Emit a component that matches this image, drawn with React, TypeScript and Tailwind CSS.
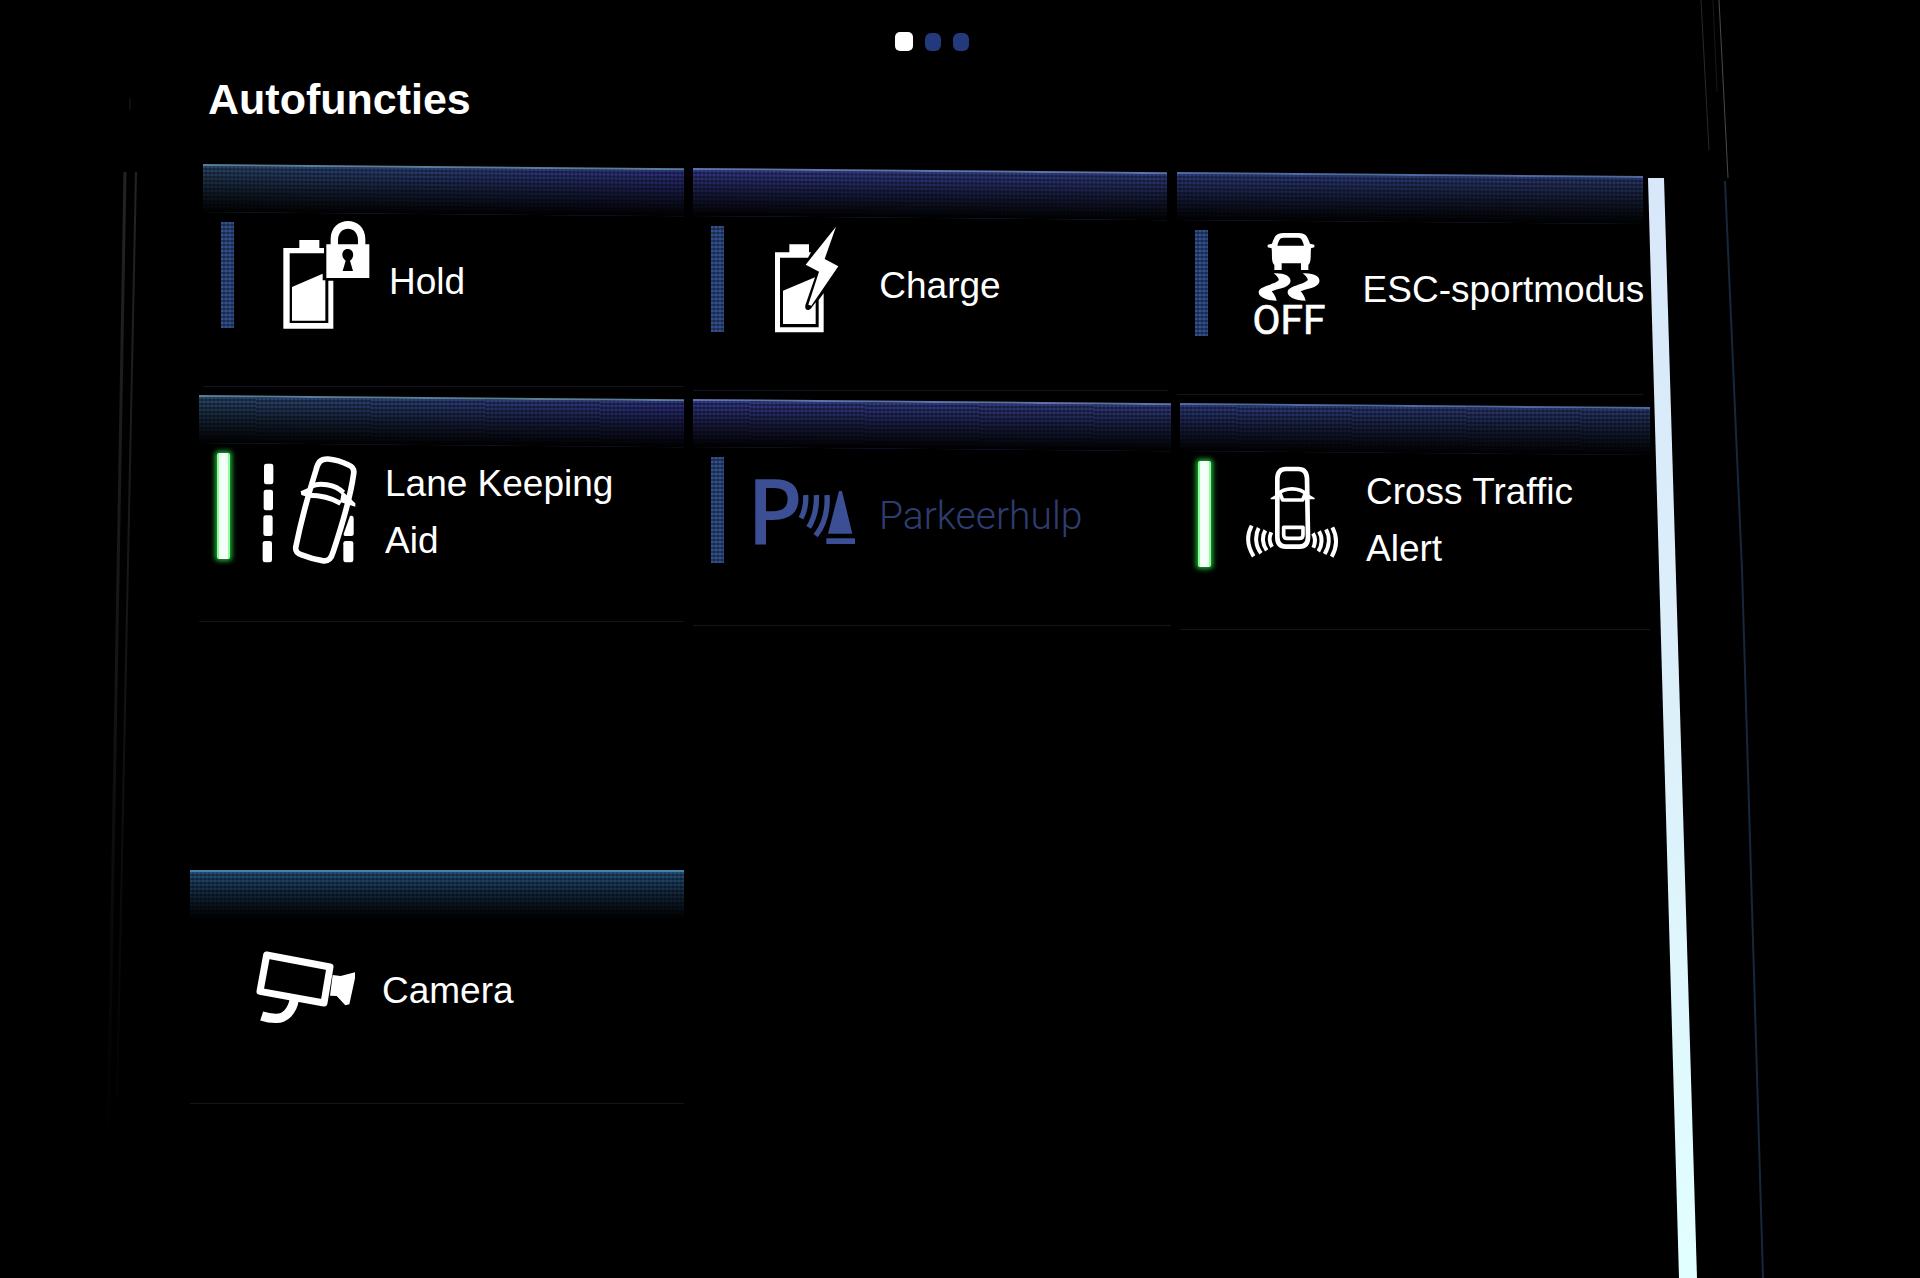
import { type ReactNode } from 'react';
import clsx from 'clsx';

type Tone = 'teal' | 'indigo' | 'navy' | 'steel';

type Tile = {
  label: string;
  icon: ReactNode;
  tone: Tone;
  state?: 'on' | 'off';
  disabled?: boolean;
};

function Icon({ viewBox, children }: { viewBox: string; children: ReactNode }) {
  return (
    <svg viewBox={viewBox} aria-hidden="true" className="h-28 w-[110px] shrink-0 overflow-visible">
      {children}
    </svg>
  );
}

function HoldIcon() {
  return (
    <Icon viewBox="225 216 330 336">
      <path fill="currentColor" d="M328 270h60v24h14v16H299v209h116V392h15v144H280V294h48z" />
      <path fill="currentColor" d="M306 411l92-40v20h8v121H306z" />
      <path
        fill="currentColor"
        fillRule="evenodd"
        d="M409 283h13v-16c0-72 104-72 104 0v16h12v101H409zM444 283h60v-12c0-46-60-46-60 0zM467 332l-9 31h31l-9-31c16-11 11-35-7-35s-22 24-6 35z"
      />
    </Icon>
  );
}

function ChargeIcon() {
  return (
    <Icon viewBox="225 228 330 336">
      <path fill="currentColor" d="M328 283h59v24h6l-9 16h-84v209h116v-82l15-20v117H285V307h43z" />
      <path fill="currentColor" d="M309 422l96-40-29 84c-3 16 10 18 18 8l13-17v65h-98z" />
      <path fill="currentColor" d="M468 230l-34 97 41 22-81 118-9-3 32-99-40-21z" />
    </Icon>
  );
}

function EscOffIcon() {
  return (
    <Icon viewBox="204 240 330 336">
      <path
        fill="currentColor"
        fillRule="evenodd"
        d="M303 281c8-22 12-32 34-32h46c22 0 26 10 34 32l13 3v8l-10 3c-2 20 2 40-8 50v15h-22v-20h-58v20h-22v-15c-10-10-6-30-8-50l-12-3v-8zM319 287h80c-4-14-7-24-18-24h-44c-11 0-14 10-18 24z"
      />
      <path
        fill="currentColor"
        d="M308 370c34-2 54 10 50 26-4 18-40 20-56 28 6 6 12 16 15 28-34 0-56-14-54-27 4-18 46-20 60-34 2-4-5-14-15-21z"
      />
      <path
        fill="currentColor"
        d="M395 370c34-2 54 10 50 26-4 18-40 20-56 28 6 6 12 16 15 28-34 0-56-14-54-27 4-18 46-20 60-34 2-4-5-14-15-21z"
      />
      <text
        x="354"
        y="551"
        textAnchor="middle"
        fill="currentColor"
        className="font-[Roboto,sans-serif] text-[122px]"
        stroke="currentColor"
        strokeWidth="2"
      >
        OFF
      </text>
    </Icon>
  );
}

function LaneIcon() {
  return (
    <Icon viewBox="213 189 330 336">
      <g fill="currentColor">
        <rect x="222" y="221" width="28" height="62" rx="7" />
        <rect x="221" y="299" width="28" height="62" rx="7" />
        <rect x="220" y="376" width="28" height="62" rx="7" />
        <rect x="218" y="453" width="28" height="64" rx="7" />
        <path d="M480 378c8-2 11 1 11 8v46c0 4-3 6-7 6h-17c-4 0-7-3-6-7z" />
        <rect x="460" y="453" width="30" height="64" rx="7" />
      </g>
      <g fill="none" stroke="currentColor" strokeWidth="17" strokeLinejoin="round">
        <path d="M414 207c24 2 44 9 62 18 14 6 17 14 15 26-8 60-30 140-62 236-6 22-16 28-32 25-20-3-44-10-64-18-14-5-18-12-15-26 16-78 36-152 60-228 6-24 14-34 36-33z" />
        <path d="M362 290c24-14 74-8 98 18" strokeWidth="15" />
        <path d="M356 316c36 0 68 8 96 24" strokeWidth="15" />
      </g>
      <path fill="currentColor" d="M332 304l36-16-4 28-8 6-22-7zM456 302l40 38v10l-46-14z" />
    </Icon>
  );
}

function ParkIcon() {
  return (
    <Icon viewBox="225 201 330 336">
      <text
        x="200"
        y="461"
        fill="currentColor"
        className="font-['Open_Sans',sans-serif] text-[274px] font-semibold"
      >
        P
      </text>
      <g fill="none" stroke="currentColor" strokeWidth="16">
        <path d="M377 315c2 30-2 48-14 70" />
        <path d="M409 315c2 38-4 66-23 97" />
        <path d="M441 315c3 52-8 90-34 122" />
      </g>
      <path fill="currentColor" d="M477 303h9l31 128h-73zM439 445h86v17h-86z" />
    </Icon>
  );
}

function CrossTrafficIcon() {
  return (
    <Icon viewBox="216 213 330 336">
      <g fill="none" stroke="currentColor" strokeWidth="14" strokeLinejoin="round">
        <path d="M347 237h38c16 0 25 9 26 28l3 176c0 20-8 29-25 29h-42c-17 0-25-9-25-29v-176c1-19 9-28 25-28z" />
        <path d="M322 313c22-22 66-22 88 0M330 310l8 20h60l8-20" strokeWidth="11" />
        <path d="M341 412h58v22c0 7-4 11-11 11h-36c-7 0-11-4-11-11z" strokeWidth="11" />
      </g>
      <path fill="currentColor" d="M302 324l26-16v20h-26zM434 324l-26-16v20h26z" />
      <g fill="none" stroke="currentColor" strokeWidth="12">
        <path d="M304 427c-7 13-6 31 2 44M286 421c-11 18-9 42 4 60M266 414c-12 22-10 54 7 76M245 407c-16 30-13 62 6 92" />
        <path d="M429 430c8 13 7 29 1 43M447 424c11 18 10 42-2 60M468 418c12 22 11 50-4 74M487 412c15 28 14 60-2 88" />
      </g>
    </Icon>
  );
}

function CameraIcon() {
  return (
    <Icon viewBox="216 204 330 336">
      <path
        fill="none"
        stroke="currentColor"
        strokeWidth="21"
        strokeLinejoin="round"
        d="M260 285l190 36-18 108-192-35z"
      />
      <path
        fill="none"
        stroke="currentColor"
        strokeWidth="28"
        d="M343 418c-6 36-28 58-56 57-18 0-30-3-42-7"
      />
      <path fill="currentColor" d="M458 345l24 3 43-11v18l-17 78-12 3-26-28-20-1z" />
    </Icon>
  );
}

const topRow: Tile[] = [
  { label: 'Hold', icon: <HoldIcon />, tone: 'teal', state: 'off' },
  { label: 'Charge', icon: <ChargeIcon />, tone: 'indigo', state: 'off' },
  { label: 'ESC-sportmodus', icon: <EscOffIcon />, tone: 'navy', state: 'off' },
];

const middleRow: Tile[] = [
  { label: 'Lane Keeping\nAid', icon: <LaneIcon />, tone: 'teal', state: 'on' },
  { label: 'Parkeerhulp', icon: <ParkIcon />, tone: 'indigo', state: 'off', disabled: true },
  { label: 'Cross Traffic\nAlert', icon: <CrossTrafficIcon />, tone: 'navy', state: 'on' },
];

const camera: Tile = { label: 'Camera', icon: <CameraIcon />, tone: 'steel' };

const bandTone: Record<Tone, string> = {
  teal: 'border-[#587d96] bg-linear-to-r from-[#30517a] to-[#363b98]',
  indigo: 'border-[#5d74a8] bg-linear-to-r from-[#3a419c] to-[#35448e]',
  navy: 'border-[#5069a0] bg-linear-to-r from-[#33438e] to-[#2e4078]',
  steel: 'border-[#4580a8] bg-[#2a5c8c]',
};

// stripes of the panel's pixel raster
const raster =
  'bg-[repeating-linear-gradient(0deg,#0000_0_2px,#0005_2px_4px),repeating-linear-gradient(90deg,#0000_0_2px,#0003_2px_4px)]';

function FunctionTile({ tile, flat, className }: { tile: Tile; flat?: boolean; className?: string }) {
  const { label, icon, tone, state, disabled } = tile;

  return (
    <button
      type="button"
      disabled={disabled}
      aria-pressed={state ? state === 'on' : undefined}
      className={clsx('flex min-w-0 flex-col text-left', disabled ? 'text-[#3c4e94]' : 'text-white', className)}
    >
      <span
        className={clsx(
          'block h-12 w-full border-t-2',
          bandTone[tone],
          !flat && 'origin-top-left skew-y-[0.5deg]',
        )}
      >
        <span className="block h-full bg-linear-to-b from-black/10 via-black/60 to-black">
          <span className={clsx('block h-full', raster)} />
        </span>
      </span>
      <span className="flex w-full flex-1 items-start pt-[10px] pl-[18px]">
        <span
          className={clsx(
            'mr-[31px] h-[106px] w-[13px] shrink-0',
            state === 'on' &&
              'rounded-xs border-x-2 border-[#8dff9a] bg-[#f4fffa] shadow-[0_0_5px_2px_#1fae35]',
            state === 'off' && 'bg-[#33508f]',
          )}
        >
          {state === 'off' && <span className={clsx('block h-full', raster)} />}
        </span>
        {icon}
        <span
          className={clsx(
            'flex items-center leading-[57px] whitespace-pre',
            flat ? 'ml-5 h-[124px]' : 'ml-[14px] h-[118px]',
            disabled
              ? "font-[Roboto,'Liberation_Sans',sans-serif] text-[39px] font-light text-[#2e3d70]"
              : 'text-[37px]',
          )}
        >
          {label}
        </span>
      </span>
      <span className="block h-px w-full bg-[#12141f]" />
    </button>
  );
}

const stagger = ['mt-0', 'mt-1', 'mt-2'];

function TileRow({ tiles, className, tileClass }: { tiles: Tile[]; className: string; tileClass: string }) {
  return (
    <div className={clsx('grid grid-cols-[485fr_478fr_470fr] items-start gap-x-[9px]', className)}>
      {tiles.map((tile, i) => (
        <FunctionTile key={tile.label} tile={tile} className={clsx(tileClass, stagger[i])} />
      ))}
    </div>
  );
}

function Bezel() {
  return (
    <svg
      viewBox="0 0 1920 1278"
      preserveAspectRatio="none"
      aria-hidden="true"
      className="pointer-events-none absolute inset-0 h-full w-full"
      fill="none"
    >
      <defs>
        <linearGradient id="edge" x1="0" y1="170" x2="0" y2="1150" gradientUnits="userSpaceOnUse">
          <stop offset="0" stopColor="#242426" />
          <stop offset="0.5" stopColor="#151517" />
          <stop offset="1" stopColor="#000" />
        </linearGradient>
      </defs>
      <path d="M125 172L108 1150" stroke="url(#edge)" strokeWidth="3" />
      <path d="M136 172L117 1100" stroke="url(#edge)" strokeWidth="2" />
      <path d="M130 98v12" stroke="#1d1d1f" />
      <path d="M1701 0l8 150" stroke="#2a2a2a" />
      <path d="M1713 0l4 92" stroke="#171717" />
      <path d="M1719 0l9 178" stroke="#4a4a4a" />
      <path d="M1725 181l17 389 21 708" stroke="#16283a" strokeWidth="2" />
    </svg>
  );
}

export default function App() {
  return (
    <div className="relative flex min-h-screen flex-col overflow-hidden bg-black font-['Liberation_Sans',Arial,sans-serif] text-white">
      <Bezel />

      <header className="flex h-[164px] flex-col pr-[264px] pl-[208px]">
        <nav aria-label="Pages" className="flex h-[51px] items-end justify-center gap-3">
          <button type="button" aria-label="Page 1" aria-current="page" className="h-[19px] w-[18px] rounded-[5px] bg-white" />
          <button type="button" aria-label="Page 2" className="h-[18px] w-4 rounded-md bg-[#24397c]" />
          <button type="button" aria-label="Page 3" className="h-[18px] w-4 rounded-md bg-[#24397c]" />
        </nav>
        <h1 className="mt-[22px] text-[43px] leading-[52px] font-bold">Autofuncties</h1>
      </header>

      <main className="flex flex-1 pr-[223px] pl-[190px]">
        <div className="min-w-0 flex-1">
          <TileRow tiles={topRow} className="pl-[13px]" tileClass="h-[223px]" />
          <TileRow tiles={middleRow} className="-mr-[7px] pl-[9px]" tileClass="h-[227px]" />
          <FunctionTile tile={camera} flat className="mt-60 h-[234px] w-[34%]" />
        </div>
        <div
          aria-hidden="true"
          className="mt-[14px] ml-[5px] w-[49px] shrink-0 bg-linear-to-b from-[#d8e8fa] via-[#dcf0fa] to-[#e2ffff] [clip-path:polygon(0_0,16px_0,100%_100%,31px_100%)]"
        />
      </main>
    </div>
  );
}
